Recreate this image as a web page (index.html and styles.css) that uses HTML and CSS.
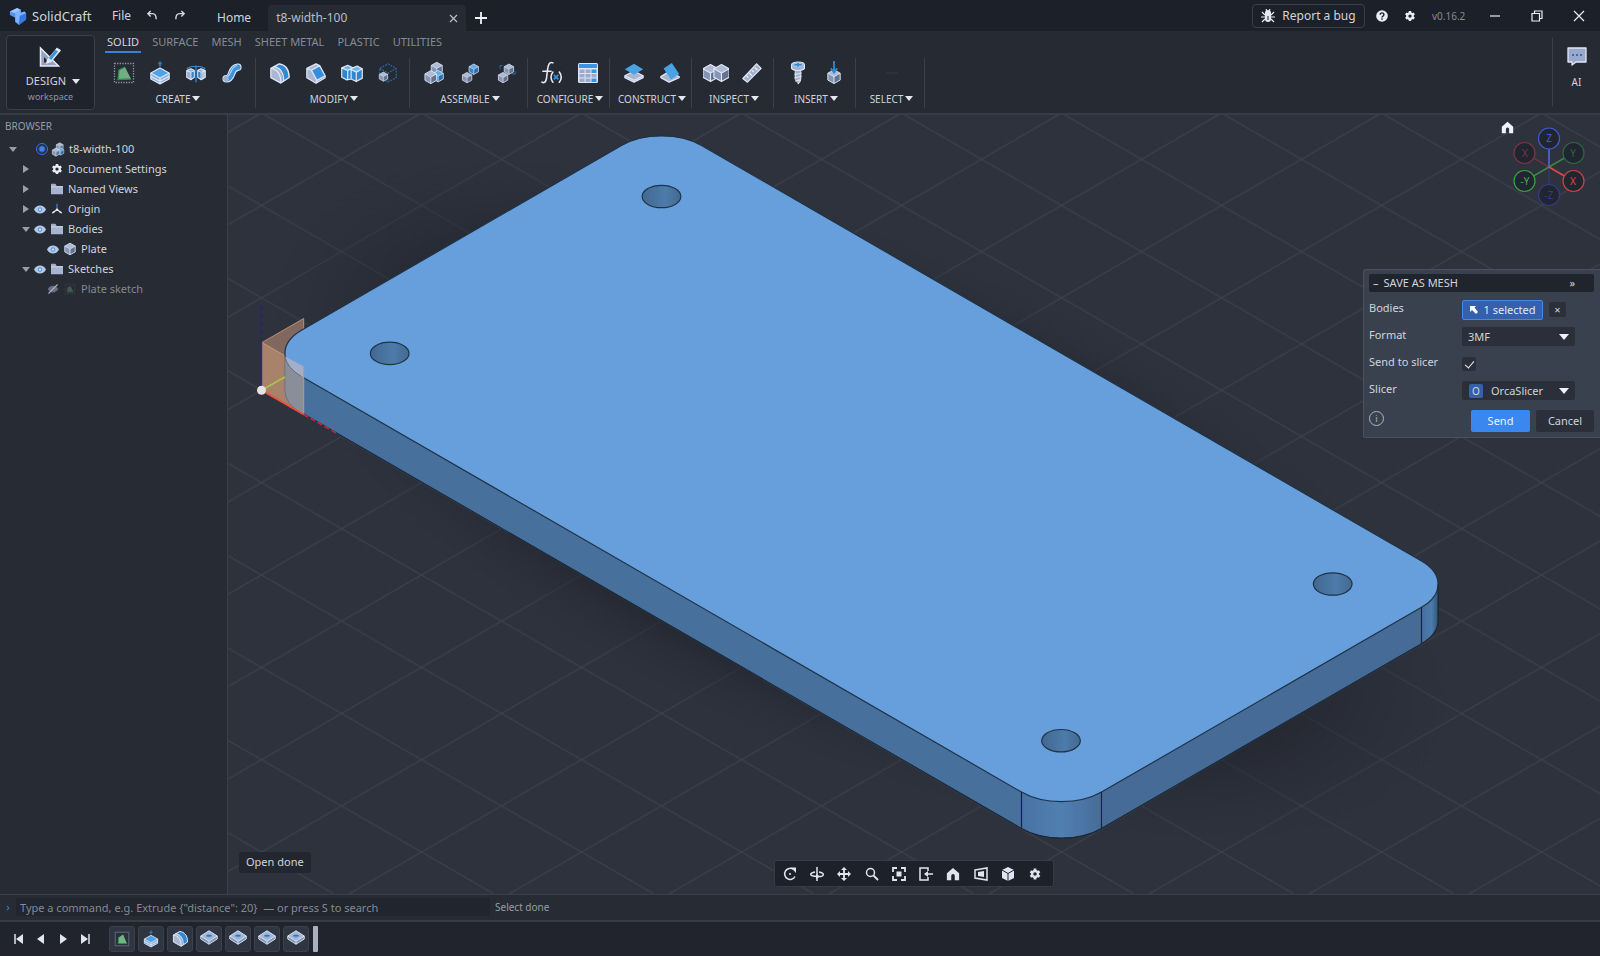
FILE: index.html
```html
<!DOCTYPE html>
<html lang="en">
<head>
<meta charset="utf-8">
<title>SolidCraft</title>
<link rel="stylesheet" href="styles.css">
</head>
<body>
<svg class="defs" aria-hidden="true">
  <defs>
    <symbol id="cube" viewBox="0 0 24 24">
      <path d="M12 2l9 5-9 5-9-5z" fill="#aebbd6"/><path d="M3 7l9 5v10l-9-5z" fill="#8795b4"/><path d="M21 7l-9 5v10l9-5z" fill="#64718f"/>
      <path d="M12 2l9 5v10l-9 5-9-5V7zM3 7l9 5 9-5M12 12v10" fill="none" stroke="#dde6f6" stroke-width="1.4" stroke-linejoin="round"/>
    </symbol>
    <symbol id="bluecube" viewBox="0 0 24 24">
      <path d="M12 2l9 5-9 5-9-5z" fill="#5fb0ea"/><path d="M3 7l9 5v10l-9-5z" fill="#2f86cf"/><path d="M21 7l-9 5v10l9-5z" fill="#2a6eae"/>
      <path d="M12 2l9 5v10l-9 5-9-5V7zM3 7l9 5 9-5M12 12v10" fill="none" stroke="#dde6f6" stroke-width="1.4" stroke-linejoin="round"/>
    </symbol>
    <symbol id="logo" viewBox="0 0 20 20">
      <path d="M1 5l8-4 4 2v3l4-1 2 2v7l-8 6-4-3v-5L1 9z" fill="#4f93f5"/><path d="M1 5l8-4 4 2-6 4z" fill="#9cc4ff"/><path d="M7 7l6-4v4l4-2 2 2-7 3v9l-5-3z" fill="#7fb3ff"/><path d="M12 10l7-3v7l-8 6z" fill="#3a78e0"/>
    </symbol>
    <symbol id="sketch" viewBox="0 0 24 24">
      <rect x="2.500" y="2.500" width="19" height="19" fill="none" stroke="#8e97a8" stroke-width="1.300" stroke-dasharray="1.300 1.300"/>
      <path d="M7 9l6-3 6 12-13 .5z" fill="#74ab87"/><path d="M7 9l6-3M7 9l-1 9.500 13-.5" fill="none" stroke="#2f9048" stroke-width="1.300"/>
    </symbol>
    <symbol id="sketchstep" viewBox="0 0 24 24">
      <rect x="3" y="3" width="18" height="18" fill="#2b3139" stroke="#596170" stroke-width="1.500"/>
      <path d="M7.500 10l6-4 5 12-11.500 0z" fill="#74b386"/><path d="M7.500 10L7 18l11.500 0" fill="none" stroke="#2f9048" stroke-width="1.300"/>
    </symbol>
    <symbol id="extrude" viewBox="0 0 24 26">
      <path d="M2 13l10 5.500 10-5.500v6.500l-10 5.500-10-5.500z" fill="#8fb4dc"/><path d="M2 13l10-5.500 10 5.500-10 5.500z" fill="#4aa3e6"/>
      <path d="M2 13l10-5.500 10 5.500v6.500l-10 5.500-10-5.500zM2 13l10 5.500 10-5.500M2 16.500l10 5.500 10-5.500M12 18.500v6" fill="none" stroke="#dde6f6" stroke-width="1.300" stroke-linejoin="round"/>
      <path d="M12 0l3 3.500h-2V6h-2V3.500H9z" fill="#2f78b8"/>
    </symbol>
    <symbol id="revolve" viewBox="0 0 26 24">
      <path d="M2 7c6-4 16-4 22 0M13 3v20" fill="none" stroke="#3a8bd4" stroke-width="1.500"/>
      <path d="M2 9l5-2 4 2v8l-4 3-5-3z" fill="#9ab0d2"/><path d="M7 10l4-2v9l-4 3zM15 8l5 2v10l-5-3z" fill="#2f86cf"/><path d="M15 8l4-1 5 2v8l-4 3V10z" fill="#b4c4df"/>
      <path d="M2 9l5-2 4 2v8l-4 3-5-3zM2 9l5 2 4-2M7 11v9M15 9l4-2 5 2v8l-5 3-4-3zM15 9l4 2 5-2M19 11v9" fill="none" stroke="#dde6f6" stroke-width="1.200" stroke-linejoin="round"/>
    </symbol>
    <symbol id="sweep" viewBox="0 0 24 24">
      <path d="M5 19c9 0 4-13 14-14" fill="none" stroke="#dde6f6" stroke-width="9" stroke-linecap="round"/>
      <path d="M5 19c9 0 4-13 14-14" fill="none" stroke="#3b94dd" stroke-width="6.500" stroke-linecap="round"/>
      <path d="M5 17c7-1 4-12 13-14" fill="none" stroke="#b9cdea" stroke-width="1.500"/><circle cx="5" cy="19" r="3.200" fill="#9fb0cf"/>
    </symbol>
    <symbol id="fillet" viewBox="0 0 24 24">
      <path d="M2 7l9-5c7 1 11 6 11 15l-9 6L2 17z" fill="#aab7d2"/><path d="M6 5l6-3c6 1 10 6 10 15l-7 4C15 12 12 7 6 5z" fill="#3189d4"/>
      <path d="M2 7l9-5c7 1 11 6 11 15l-9 6L2 17zM2 7c7 1 11 7 11 16M5 5c7 1 11 7 11 16" fill="none" stroke="#dde6f6" stroke-width="1.400" stroke-linejoin="round"/>
    </symbol>
    <symbol id="chamfer" viewBox="0 0 24 24">
      <path d="M2 7l10-5 4 2 6 12-10 6-10-5z" fill="#aab7d2"/><path d="M7 9l9-5 6 11-9 5z" fill="#358edb"/>
      <path d="M2 7l10-5 4 2 6 11v2l-10 6-10-6zM2 7l5 2 9-5M7 9l6 11 9-5M13 20l-1 3" fill="none" stroke="#dde6f6" stroke-width="1.400" stroke-linejoin="round"/>
    </symbol>
    <symbol id="combine" viewBox="0 0 28 24">
      <path d="M2 6l7-3 6 3 5-2 6 3v11l-7 4-6-3-5 1-6-3z" fill="#2f86cf"/><path d="M2 6l7-3 6 3-6 4zM13 8l7-4 6 3-7 4z" fill="#6bb6ee"/>
      <path d="M2 6l7-3 6 3 5-2 6 3v11l-7 4-6-3-5 1-6-3zM2 6l7 3 6-3M9 9v11M13 8l6 3 7-4M19 11v11M13 8v11" fill="none" stroke="#dde6f6" stroke-width="1.400" stroke-linejoin="round"/>
    </symbol>
    <symbol id="shell" viewBox="0 0 24 24">
      <path d="M12 2l9 5v10l-9 5-9-5V7zM3 7l9 5 9-5M12 12v10" fill="none" stroke="#2e6ea8" stroke-width="1.200" stroke-dasharray="2 1.200"/>
      <use href="#cube" x="1" y="10" width="12" height="12"/>
    </symbol>
    <symbol id="component" viewBox="0 0 24 26">
      <use href="#cube" x="7" y="0" width="16" height="16"/><use href="#bluecube" x="9" y="9" width="15" height="15"/><use href="#cube" x="0" y="9" width="17" height="17"/>
    </symbol>
    <symbol id="joint" viewBox="0 0 24 26">
      <use href="#bluecube" x="9" y="1" width="15" height="15"/><use href="#cube" x="1" y="11" width="15" height="15"/>
    </symbol>
    <symbol id="joint2" viewBox="0 0 24 26">
      <path d="M5 8V4h3M23 11v3h-4" stroke="#2766a2" fill="none" stroke-width="1.300"/><use href="#cube" x="8" y="1" width="15" height="15"/><use href="#cube" x="1" y="11" width="15" height="15"/>
    </symbol>
    <symbol id="params" viewBox="0 0 24 26">
      <path d="M13 2c-4-2-5 2-6 8l-1 9c-1 5-3 5-5 4M2 11h9M13 12c-3 4-3 7 0 11M20 12c3 4 3 7 0 11" fill="none" stroke="#e6edf8" stroke-width="1.700" stroke-linecap="round"/>
      <path d="M14 15l5 5M19 15l-5 5" stroke="#3a94e0" stroke-width="1.700"/>
    </symbol>
    <symbol id="table" viewBox="0 0 24 24">
      <rect x="2" y="2" width="20" height="20" rx="1.500" fill="#dde6f6"/><path d="M3 3h18v4H3z" fill="#3a94e0"/><path d="M3.500 8.500H8.500v3.500h-5zM9.500 8.500h5v3.500h-5zM3.500 13h5v3.500h-5zM9.500 13h5v3.500h-5zM3.500 17.500h5v3.500h-5zM9.500 17.500h5v3.500h-5zM15.500 13h5v3.500h-5z" fill="#9babc9"/><path d="M15.500 8.500h5v3.500h-5zM15.500 17.500h5v3.500h-5z" fill="#3a94e0"/>
    </symbol>
    <symbol id="offsetplane" viewBox="0 0 24 24">
      <path d="M2 15l10-5 10 5v2l-10 5-10-5z" fill="#a9b6d2" stroke="#dde6f6" stroke-width="1.400" stroke-linejoin="round"/><path d="M2 15l10 5 10-5" fill="none" stroke="#dde6f6" stroke-width="1.300"/><path d="M2 8l10-6 10 6-10 6z" fill="#49a2e4"/>
    </symbol>
    <symbol id="angleplane" viewBox="0 0 24 24">
      <path d="M2 16l8-5 12 5v1l-11 5-9-5z" fill="#a9b6d2" stroke="#dde6f6" stroke-width="1.400" stroke-linejoin="round"/><path d="M5 7l9-6 8 12-9 6z" fill="#49a2e4"/>
    </symbol>
    <symbol id="interfere" viewBox="0 0 28 24">
      <use href="#cube" x="-3" y="1" width="22" height="22"/><use href="#cube" x="9" y="1" width="22" height="22"/>
    </symbol>
    <symbol id="measure" viewBox="0 0 24 24">
      <path d="M2 18L17 2l5 5L7 22z" fill="#a5b1cb" stroke="#dde6f6" stroke-width="1.400" stroke-linejoin="round"/><path d="M6 15l2 2M9 12l3 3M12 9l2 2M15 6l3 3" stroke="#e9effa" stroke-width="1.300"/>
    </symbol>
    <symbol id="bolt" viewBox="0 0 24 26">
      <path d="M9 10h6v11l-3 4-3-4z" fill="#a5b1cb"/><path d="M5 4c0-4 14-4 14 0v4c-2 3-12 3-14 0z" fill="#a5b1cb" stroke="#dde6f6" stroke-width="1.300"/><ellipse cx="12" cy="4" rx="6.500" ry="2.800" fill="#9fc6ea"/><path d="M8 4h8M12 2v4" stroke="#2f86cf" stroke-width="1.700"/><path d="M9 11v9M15 11v9M8 15l8-2M8 18.500l8-2M9 22l6-2M12 25l3-4" stroke="#dde6f6" stroke-width="1.200"/>
    </symbol>
    <symbol id="insertmesh" viewBox="0 0 24 26">
      <use href="#cube" x="3" y="8" width="18" height="18"/><path d="M12 0v11M8.500 8l3.500 4.500L15.500 8" fill="none" stroke="#2f8ad6" stroke-width="2"/>
    </symbol>
    <symbol id="hole" viewBox="0 0 24 20">
      <path d="M1 8l11-7 11 7v4l-11 7-11-7z" fill="#7f93b5"/><path d="M1 8l11-7 11 7-11 7z" fill="#a3b6d6"/><path d="M1 8l11-7 11 7v4l-11 7-11-7zM1 8l11 7 11-7M12 15v4" fill="none" stroke="#dde6f6" stroke-width="1.200"/><ellipse cx="12" cy="7.500" rx="4" ry="2" fill="#2f77bb" stroke="#c3d3ec" stroke-width=".6"/>
    </symbol>
    <symbol id="folder" viewBox="0 0 16 14"><path d="M1 2h5l1 1.500h8V13H1z" fill="#a6b4cf"/><path d="M1 1.500h5l1 1.500M1 4.500h14" stroke="#d3dcec" fill="none"/></symbol>
    <symbol id="eye" viewBox="0 0 16 12"><path d="M0 6c3-7 13-7 16 0-3 7-13 7-16 0z" fill="#b4c8e8"/><circle cx="8" cy="6" r="3" fill="#5b9ade"/><circle cx="8" cy="6" r="1.500" fill="#dce9fa"/></symbol>
    <symbol id="eyeoff" viewBox="0 0 16 14"><path d="M1 7c3-6 11-6 14 0-3 6-11 6-14 0z" fill="#666f80"/><path d="M2 13L14 1" stroke="#aab3c2" stroke-width="1.500"/></symbol>
    <symbol id="gear" viewBox="0 0 24 24"><g stroke="currentColor" stroke-width="5" fill="none"><circle cx="12" cy="12" r="5.500" stroke-width="4.500"/><path d="M12 2v4M12 18v4M3.400 7l3.400 2M17.200 15l3.400 2M3.400 17l3.400-2M17.200 9l3.400-2"/></g></symbol>
    <symbol id="home" viewBox="0 0 16 16"><path d="M8 1l7 6v8h-5v-5a2 2 0 0 0-4 0v5H1V7z" fill="currentColor"/></symbol>
    <symbol id="axes" viewBox="0 0 16 16"><path d="M8 1v9" stroke="#3a8fdc" stroke-width="1.500"/><path d="M8 9l6 4M8 9l-6 4" stroke="#e8eefa" stroke-width="1.700"/><path d="M1 14l4-1-2-2zM15 14l-4-1 2-2z" fill="#e8eefa"/><circle cx="8" cy="9" r="1.700" fill="#e8eefa"/></symbol>
  </defs>
</svg>

<header class="titlebar">
  <div class="brand"><svg width="18" height="20"><use href="#logo"/></svg>SolidCraft</div>
  <button class="plain file">File</button>
  <button class="plain hist" aria-label="Undo"><svg width="11" height="11" viewBox="0 0 12 12"><path d="M4 1L1 4l3 3M1 4h5c3 0 4 2 4 6" class="line"/></svg></button>
  <button class="plain hist" aria-label="Redo"><svg width="11" height="11" viewBox="0 0 12 12"><path d="M8 1l3 3-3 3M11 4H6C3 4 2 6 2 10" class="line"/></svg></button>
  <nav class="doctabs">
    <a href="#" class="hometab">Home</a>
    <div class="doctab"><a href="#">t8-width-100</a><button class="plain" aria-label="Close tab"><svg width="9" height="9" viewBox="0 0 9 9"><path d="M1 1l7 7M8 1L1 8" class="line thin"/></svg></button></div>
    <button class="plain add" aria-label="New tab"><svg width="12" height="12" viewBox="0 0 12 12"><path d="M6 0v12M0 6h12" class="line bold"/></svg></button>
  </nav>
  <div class="titleright">
    <button class="bug"><svg width="14" height="14" viewBox="0 0 14 14"><path d="M4 4a3 3 0 0 1 6 0v6a3 3 0 0 1-6 0z" fill="#e4eaf5"/><path d="M1 3l3 3M13 3l-3 3M0 8h4M14 8h-4M1 13l3-3M13 13l-3-3M5 0l1 2M9 0L8 2" stroke="#e4eaf5" stroke-width="1.200"/><path d="M7 7v4" stroke="#1c2028"/></svg>Report a bug</button>
    <button class="plain" aria-label="Help"><svg width="12" height="12" viewBox="0 0 12 12"><circle cx="6" cy="6" r="5.800" fill="#e9eef8"/><path d="M4.200 4.700c0-2.500 3.700-2.400 3.700 0 0 1.400-1.900 1.400-1.900 2.700M6 8.300v1.400" fill="none" stroke="#1c2028" stroke-width="1.400"/></svg></button>
    <button class="plain" aria-label="Settings"><svg width="12" height="12"><use href="#gear"/></svg></button>
    <span class="version">v0.16.2</span>
    <div class="wins">
      <button class="plain" aria-label="Minimize"><svg width="10" height="12" viewBox="0 0 10 12"><path d="M0 6h10" class="line thin"/></svg></button>
      <button class="plain" aria-label="Restore"><svg width="12" height="12" viewBox="0 0 12 12"><path d="M1 3.500h7.500V11H1zM3.500 3V1H11v7.500H9" class="line thin"/></svg></button>
      <button class="plain" aria-label="Close"><svg width="12" height="12" viewBox="0 0 12 12"><path d="M1 1l10 10M11 1L1 11" class="line thin"/></svg></button>
    </div>
  </div>
</header>

<section class="ribbon">
  <button class="workspace">
    <svg width="22" height="22" viewBox="0 0 22 22"><path d="M1.500 2v18h18z" fill="#97a3bf" stroke="#e6ecf8" stroke-width="1.500"/><path d="M5 11v5.500h5.500z" fill="#262a33"/><path d="M20 3L10 15" stroke="#dde6f6" stroke-width="5"/><path d="M19 3L11 13" stroke="#3b94dd" stroke-width="3"/><path d="M17 3l4 2" stroke="#e6ecf8" stroke-width="2.500"/><path d="M7 18l1-5 4 3z" fill="#e6ecf8"/></svg>
    <span class="wsname">DESIGN<i class="tri"></i></span><span class="wssub">workspace</span>
  </button>
  <div class="tools">
    <nav class="tabs"><a href="#" class="on">SOLID</a><a href="#">SURFACE</a><a href="#">MESH</a><a href="#">SHEET METAL</a><a href="#">PLASTIC</a><a href="#">UTILITIES</a></nav>
    <div class="groups">
      <div class="group"><div class="icons">
        <button aria-label="Sketch"><svg width="24" height="24"><use href="#sketch"/></svg></button>
        <button aria-label="Extrude"><svg width="22" height="24"><use href="#extrude"/></svg></button>
        <button aria-label="Revolve"><svg width="22" height="22"><use href="#revolve"/></svg></button>
        <button aria-label="Sweep"><svg width="20" height="20"><use href="#sweep"/></svg></button></div>
        <button class="glabel">CREATE<i class="tri"></i></button></div>
      <div class="group"><div class="icons">
        <button aria-label="Fillet"><svg width="22" height="22"><use href="#fillet"/></svg></button>
        <button aria-label="Chamfer"><svg width="22" height="22"><use href="#chamfer"/></svg></button>
        <button aria-label="Combine"><svg width="24" height="22"><use href="#combine"/></svg></button>
        <button aria-label="Shell"><svg width="22" height="24"><use href="#shell"/></svg></button></div>
        <button class="glabel">MODIFY<i class="tri"></i></button></div>
      <div class="group"><div class="icons">
        <button aria-label="New component"><svg width="22" height="24"><use href="#component"/></svg></button>
        <button aria-label="Joint"><svg width="20" height="22"><use href="#joint"/></svg></button>
        <button aria-label="As-built joint"><svg width="20" height="22"><use href="#joint2"/></svg></button></div>
        <button class="glabel">ASSEMBLE<i class="tri"></i></button></div>
      <div class="group"><div class="icons">
        <button aria-label="Parameters"><svg width="22" height="24"><use href="#params"/></svg></button>
        <button aria-label="Configuration table"><svg width="24" height="24"><use href="#table"/></svg></button></div>
        <button class="glabel">CONFIGURE<i class="tri"></i></button></div>
      <div class="group"><div class="icons">
        <button aria-label="Offset plane"><svg width="22" height="22"><use href="#offsetplane"/></svg></button>
        <button aria-label="Angle plane"><svg width="22" height="22"><use href="#angleplane"/></svg></button></div>
        <button class="glabel">CONSTRUCT<i class="tri"></i></button></div>
      <div class="group"><div class="icons">
        <button aria-label="Interference"><svg width="26" height="22"><use href="#interfere"/></svg></button>
        <button aria-label="Measure"><svg width="22" height="22"><use href="#measure"/></svg></button></div>
        <button class="glabel">INSPECT<i class="tri"></i></button></div>
      <div class="group"><div class="icons">
        <button aria-label="Insert fastener"><svg width="22" height="24"><use href="#bolt"/></svg></button>
        <button aria-label="Insert mesh"><svg width="22" height="24"><use href="#insertmesh"/></svg></button></div>
        <button class="glabel">INSERT<i class="tri"></i></button></div>
      <div class="group sel"><div class="icons"><button aria-label="Select"><svg width="12" height="4" viewBox="0 0 12 4"><path d="M0 2h12" stroke="#363b46"/></svg></button></div>
        <button class="glabel">SELECT<i class="tri"></i></button></div>
    </div>
  </div>
  <button class="ai"><svg width="20" height="19" viewBox="0 0 20 19"><path d="M1 1h18v14H9l-4 3v-3H1z" fill="#9ba8cc" stroke="#dfe7f7" stroke-width="1.300" stroke-linejoin="round"/><path d="M5 8h2M9 8h2M13 8h2" stroke="#2678b8" stroke-width="2"/></svg>AI</button>
</section>

<main class="main">
  <aside class="browser">
    <h2>BROWSER</h2>
    <ul class="tree">
      <li class="l0"><i class="tg down"></i><input type="radio" checked aria-label="Activate t8-width-100"><svg class="ic" width="14" height="15"><use href="#component"/></svg><span>t8-width-100</span></li>
      <li class="l1"><i class="tg"></i><i class="vis"></i><svg class="ic" width="12" height="12"><use href="#gear"/></svg><span>Document Settings</span></li>
      <li class="l1"><i class="tg"></i><i class="vis"></i><svg class="ic" width="14" height="12"><use href="#folder"/></svg><span>Named Views</span></li>
      <li class="l1"><i class="tg"></i><svg class="vis" height="9"><use href="#eye"/></svg><svg class="ic" width="12" height="12"><use href="#axes"/></svg><span>Origin</span></li>
      <li class="l1"><i class="tg down"></i><svg class="vis" height="9"><use href="#eye"/></svg><svg class="ic" width="14" height="12"><use href="#folder"/></svg><span>Bodies</span></li>
      <li class="l2"><svg class="vis" height="9"><use href="#eye"/></svg><svg class="ic" width="14" height="14"><use href="#cube"/></svg><span>Plate</span></li>
      <li class="l1"><i class="tg down"></i><svg class="vis" height="9"><use href="#eye"/></svg><svg class="ic" width="14" height="12"><use href="#folder"/></svg><span>Sketches</span></li>
      <li class="l2 off"><svg class="vis" height="12"><use href="#eyeoff"/></svg><svg class="ic faint" width="12" height="12"><use href="#sketch"/></svg><span>Plate sketch</span></li>
    </ul>
  </aside>

  <section class="viewport">
    <svg class="scene" viewBox="228 115 1372 780" preserveAspectRatio="xMidYMid slice" role="img" aria-label="Plate model">
      <defs>
        <pattern id="grid" x="261.500" y="390.700" width="160" height="92.380" patternUnits="userSpaceOnUse"><path d="M0 0L160 92.380M0 92.380L160 0" stroke="#3e444f" stroke-width="1"/></pattern>
        <radialGradient id="shade"><stop offset=".5" stop-color="#1d2027" stop-opacity=".9"/><stop offset=".7" stop-color="#1f222a" stop-opacity=".75"/><stop offset=".85" stop-color="#262932" stop-opacity=".35"/><stop offset="1" stop-color="#2e323d" stop-opacity="0"/></radialGradient>
        <linearGradient id="round"><stop offset="0" stop-color="#4873a3"/><stop offset=".5" stop-color="#507fb1"/><stop offset="1" stop-color="#466c99"/></linearGradient>
        <linearGradient id="bore"><stop offset="0" stop-color="#426890"/><stop offset=".6" stop-color="#4d7bab"/><stop offset="1" stop-color="#44698f"/></linearGradient>
        <linearGradient id="edge"><stop offset="0" stop-color="#456f9e"/><stop offset=".6" stop-color="#4b7cac"/><stop offset="1" stop-color="#355575"/></linearGradient>
      </defs>
      <rect x="0" y="0" width="1900" height="1200" fill="#2e323d"/>
      <rect x="0" y="0" width="1900" height="1200" fill="url(#grid)"/>
      <circle r="1.380" fill="url(#shade)" transform="matrix(400 231 200 -115.500 861 500)"/>
      <path d="M262 343L303.700 319V367L262 391Z" fill="#80685f" stroke="#b98d70"/>
      <path d="M262 343L303.700 367V415L262 391Z" fill="#a9826c" stroke="#c99470"/>
      <path d="M284.900 353.800V390.700A56.600 32.700 0 0 0 301.500 413.800L1021.500 829.500H1062L1061 780 301.500 340Z" fill="#48709d"/>
      <path d="M1061 790L1101.500 829.500 1421.500 644.700V600Z" fill="#466b97"/>
      <path d="M1021.500 780V829A56.600 32.700 0 0 0 1101.500 829V780Z" fill="url(#round)"/>
      <path d="M1421.500 590V644.700A56.600 32.700 0 0 0 1438.100 621.600V584.700Z" fill="url(#edge)"/>
      <path d="M301.500 330.700L621.500 146A56.600 32.700 0 0 1 701.500 146L1421.500 561.600A56.600 32.700 0 0 1 1421.500 607.800L1101.500 792.600A56.600 32.700 0 0 1 1021.500 792.600L301.500 376.900A56.600 32.700 0 0 1 301.500 330.700Z" fill="#669fdb" stroke="#1f3347" stroke-width="1.200"/>
      <path d="M301.500 413.200L1021.500 829A56.600 32.700 0 0 0 1101.500 829L1421.500 644.200A56.600 32.700 0 0 0 1438.100 621V584.700M1021.500 792.600V829M1101.500 792.600V829M1421.500 607.800V644.200" fill="none" stroke="#192735" stroke-width="1.200"/>
      <g fill="url(#bore)" stroke="#1f3347" stroke-width="1.200"><ellipse cx="661.500" cy="197" rx="19.300" ry="11.200"/><ellipse cx="389.700" cy="353.900" rx="19.300" ry="11.200"/><ellipse cx="1332.700" cy="584.500" rx="19.300" ry="11.200"/><ellipse cx="1061" cy="741.200" rx="19.300" ry="11.200"/></g>
      <path d="M284.900 353.800V390.700A56.600 32.700 0 0 0 301.500 413.800L303.700 415V378L301.500 376.900A56.600 32.700 0 0 1 284.900 353.800Z" fill="#8a8e99"/>
      <path d="M285.300 357L303.700 367V378L301.500 376.900A56.600 32.700 0 0 1 285.300 357Z" fill="#a3afc8"/>
      <path d="M284.900 358V390.700A56.600 32.700 0 0 0 301.500 413.800M284.900 357A56.600 32.700 0 0 0 301.500 376.900" fill="none" stroke="#71747e"/>
      <path d="M303.700 367V414" stroke="#b39c90"/>
      <path d="M261.500 390.700V343" stroke="#2b2390" stroke-width="1.500"/><path d="M261.500 343V303" stroke="#201f8c" stroke-width="1.500" stroke-dasharray="5 3"/>
      <path d="M261.500 390.700L285 377.500" stroke="#a8c840" stroke-width="1.700"/><path d="M261.500 390.700L303.700 415" stroke="#f04a35" stroke-width="1.700"/><path d="M303.700 415L337 434" stroke="#cf2534" stroke-width="1.500" stroke-dasharray="5 3"/>
      <circle cx="261.500" cy="390.700" r="4.500" fill="#e4e2e3"/>
    </svg>

    <div class="gizmo">
      <button class="plain" aria-label="Home view"><svg width="13" height="13"><use href="#home"/></svg></button>
      <svg class="compass" width="69" height="80" viewBox="1 0 71 80" preserveAspectRatio="xMinYMin slice" overflow="visible">
        <path d="M36 40v28" stroke="#2e3a80"/><path d="M36 40L12 26" stroke="#7d3240" stroke-width="1.300"/><path d="M36 40l24-14M36 40L12 54" stroke="#3d8544" stroke-width="1.500"/><path d="M36 40V11" stroke="#4866dd" stroke-width="1.700"/><path d="M36 40l24 14" stroke="#e34646" stroke-width="1.700"/>
        <g fill="#20252f" stroke-width="1.200"><circle cx="36" cy="11.500" r="10.500" stroke="#405bce"/><circle cx="11.500" cy="26" r="10.500" stroke="#7c3544"/><circle cx="60.500" cy="26" r="10.500" stroke="#2e6740"/><circle cx="11.500" cy="54" r="10.500" stroke="#37a341"/><circle cx="60.500" cy="54" r="10.500" stroke="#d24047"/><circle cx="36" cy="68" r="10.500" stroke="#303e88"/></g>
        <g class="axis"><text x="36" y="15" fill="#405bce">Z</text><text x="12" y="30" fill="#7c3544">X</text><text x="60" y="30" fill="#2e6740">Y</text><text x="12" y="58" fill="#3fb549">-Y</text><text x="60" y="58" fill="#e34646">X</text><text x="36" y="72" fill="#303e88">-Z</text></g>
      </svg>
    </div>

    <form class="panel">
      <div class="phead"><span>–</span><span>SAVE AS MESH</span><span class="more">»</span></div>
      <div class="prow"><span class="lab">Bodies</span><div class="ctl"><button type="button" class="picked"><svg width="8" height="8" viewBox="0 0 8 8"><path d="M0 0h6L4.500 1.500 8 6 6 8 2 4 0 6z" fill="#fff"/></svg>1 selected</button><button type="button" class="clear" aria-label="Clear bodies">×</button></div></div>
      <div class="prow"><label class="lab" for="fmt">Format</label><div class="ctl drop"><select id="fmt"><option>3MF</option></select></div></div>
      <div class="prow"><label class="lab" for="snd">Send to slicer</label><div class="ctl"><input type="checkbox" id="snd" checked></div></div>
      <div class="prow"><label class="lab" for="slc">Slicer</label><div class="ctl drop badge"><b>O</b><select id="slc"><option>OrcaSlicer</option></select></div></div>
      <div class="pfoot"><button type="button" class="info" aria-label="Info">i</button><button type="button" class="send">Send</button><button type="button" class="cancel">Cancel</button></div>
    </form>

    <output class="toast">Open done</output>

    <div class="viewbar">
      <button aria-label="Orbit"><svg viewBox="0 0 14 14"><path d="M10.500 2.500a5.500 5.500 0 1 0 1.500 7" class="line"/><path d="M8 0.500h5v5.500z" fill="currentColor"/><circle cx="7" cy="7" r="1" fill="currentColor"/></svg></button>
      <button aria-label="Turntable"><svg viewBox="0 0 14 14"><path d="M7 0v14M5 5C-1 6-1 9 7 9.500S15 6 9 5" class="line"/><path d="M6 7l4 2.500L6 12z" fill="currentColor"/></svg></button>
      <button aria-label="Pan"><svg viewBox="0 0 14 14"><path d="M7 1v12M1 7h12" class="line bold"/><path d="M7 0l3 3H4zM7 14l3-3H4zM0 7l3-3v6zM14 7l-3-3v6z" fill="currentColor"/></svg></button>
      <button aria-label="Zoom"><svg viewBox="0 0 14 14"><circle cx="5.500" cy="5.500" r="4" class="line"/><path d="M8.500 8.500L13 13" class="line bold"/></svg></button>
      <button aria-label="Fit"><svg viewBox="0 0 14 14"><path d="M1 5V1h4M9 1h4v4M13 9v4H9M5 13H1V9" class="line bold"/><path d="M4.500 4.500h5v5h-5z" fill="currentColor"/></svg></button>
      <button aria-label="Look at"><svg viewBox="0 0 14 14"><path d="M9 4V1H1v12h8v-3M6 7h8" class="line"/><path d="M5 7l4-3v6z" fill="currentColor"/></svg></button>
      <button aria-label="Home"><svg viewBox="0 0 16 16"><use href="#home" width="16" height="16"/></svg></button>
      <button aria-label="Perspective"><svg viewBox="0 0 14 14"><path d="M1 3l12-2v12L1 11z" class="line"/><path d="M4 5l6-1v6L4 9z" fill="currentColor"/></svg></button>
      <button aria-label="Display style"><svg viewBox="0 0 14 14"><path d="M7 0l6 3v8l-6 3-6-3V3z" fill="currentColor"/><path d="M1 3l6 3.500L13 3M7 6.500V14" stroke="#1d212a" fill="none"/></svg></button>
      <button aria-label="View settings"><svg viewBox="0 0 26 26"><use href="#gear" x="1" y="1" width="24" height="24"/></svg></button>
    </div>
  </section>
</main>

<section class="command"><span class="prompt">›</span><input type="text" aria-label="Command" placeholder="Type a command, e.g. Extrude {&quot;distance&quot;: 20}  — or press S to search"><span class="status">Select done</span></section>

<footer class="timeline">
  <button class="plain" aria-label="First"><svg width="10" height="10" viewBox="0 0 10 10"><path d="M1 0v10" class="line"/><path d="M9 0v10L2 5z" fill="currentColor"/></svg></button>
  <button class="plain" aria-label="Previous"><svg width="10" height="10" viewBox="0 0 10 10"><path d="M8 0v10L1 5z" fill="currentColor"/></svg></button>
  <button class="plain" aria-label="Play"><svg width="10" height="10" viewBox="0 0 10 10"><path d="M2 0v10l7-5z" fill="currentColor"/></svg></button>
  <button class="plain" aria-label="Last"><svg width="10" height="10" viewBox="0 0 10 10"><path d="M9 0v10" class="line"/><path d="M1 0v10l7-5z" fill="currentColor"/></svg></button>
  <div class="steps">
    <button aria-label="Sketch"><svg width="18" height="18"><use href="#sketchstep"/></svg></button>
    <button aria-label="Extrude"><svg width="16" height="18"><use href="#extrude"/></svg></button>
    <button aria-label="Fillet"><svg width="17" height="17"><use href="#fillet"/></svg></button>
    <button class="hole" aria-label="Hole 1"><svg width="18" height="15"><use href="#hole"/></svg></button>
    <button class="hole" aria-label="Hole 2"><svg width="18" height="15"><use href="#hole"/></svg></button>
    <button class="hole" aria-label="Hole 3"><svg width="18" height="15"><use href="#hole"/></svg></button>
    <button class="hole" aria-label="Hole 4"><svg width="18" height="15"><use href="#hole"/></svg></button>
    <i class="marker"></i>
  </div>
</footer>
</body>
</html>
```
FILE: styles.css
```css
* { box-sizing: border-box; }
body { margin: 0; height: 100vh; display: flex; flex-direction: column; overflow: hidden; background: #272b34; color: #cfd4dd; font: 12px/16px "Noto Sans", sans-serif; }
button, input, select { font: inherit; color: inherit; margin: 0; }
button { padding: 0; border: 0; background: none; display: flex; align-items: center; justify-content: center; white-space: nowrap; }
a { color: inherit; text-decoration: none; }
svg { display: block; flex: none; }
i { font-style: normal; }
.defs { position: absolute; width: 0; height: 0; }
.line { fill: none; stroke: currentColor; stroke-width: 1.5; }
.thin { stroke-width: 1.2; }
.bold { stroke-width: 1.8; }
.tri { display: inline-block; border: 4px solid transparent; border-top: 5px solid #e3e7ee; border-bottom: 0; }

.titlebar { flex: none; height: 31px; background: #1c2028; display: flex; align-items: center; }
.brand { display: flex; align-items: center; gap: 5px; width: 104px; padding-left: 9px; font-size: 13px; white-space: nowrap; }
.file { width: 35px; }
.hist { width: 27px; color: #d5dae4; }
.doctabs { display: flex; align-self: stretch; align-items: flex-end; margin-left: 12px; }
.doctabs > * { height: 26px; display: flex; align-items: center; }
.hometab { padding: 0 17px 0 12px; }
.doctab { width: 198px; background: #262a33; border-radius: 4px 4px 0 0; padding: 0 8px; justify-content: space-between; color: #b9bec8; }
.add { width: 30px; color: #f0f3f8; }
.titleright { margin-left: auto; display: flex; align-items: center; gap: 16px; padding-right: 15px; color: #e9eef8; }
.bug { height: 24px; width: 113px; gap: 7px; border: 1px solid #3b404b; border-radius: 4px; color: #cfd4dd; margin-right: -5px; }
.version { font-size: 10px; color: #858b97; width: 34px; }
.wins { display: flex; gap: 30px; margin-left: 7px; }
.wins button { width: 12px; }

.ribbon { flex: none; height: 84px; display: flex; background: #262a33; border-bottom: 2px solid #383c46; }
.workspace { flex: none; flex-direction: column; width: 89px; height: 75px; margin: 4px 0 0 6px; padding-top: 6px; background: #1f232b; border: 1px solid #3a3f49; border-radius: 4px; }
.workspace svg { margin: 0 2px 5px 0; }
.wsname { display: flex; align-items: center; gap: 6px; padding-left: 5px; font-size: 11px; }
.wssub { font-size: 9px; color: #90959f; }
.tools { flex: 1; padding-left: 11px; }
.tabs { display: flex; gap: 13px; font-size: 11px; color: #858b96; height: 27px; white-space: nowrap; padding-left: 1px; }
.tabs a { height: 22px; padding-top: 3px; }
.tabs .on { color: #cfd4dd; border-bottom: 2px solid #3b7fd8; margin: 0 -2px; padding-left: 2px; padding-right: 2px; }
.groups { display: flex; height: 50px; }
.group { padding: 0 3px 0 6px; border-right: 1px solid #3a3f49; display: flex; flex-direction: column; }
.group:first-child { padding: 0 5px 0 0; }
.icons { display: flex; height: 33px; margin-bottom: 2px; justify-content: center; }
.icons button { width: 36px; }
.sel { width: 69px; }
.glabel { gap: 2px; height: 20px; font-size: 10px; }
.ai { width: 48px; height: 68px; margin-top: 7px; padding-bottom: 8px; border-left: 1px solid #3a3f49; flex-direction: column; gap: 8px; font-size: 10px; }

.main { flex: 1; min-height: 0; display: grid; grid-template-columns: 228px 1fr; }
.browser { background: #272b34; border-right: 1px solid #3a3f49; }
.browser h2 { margin: 4px 0 5px 5px; font-weight: 400; font-size: 10px; line-height: 15px; color: #969ba6; }
.tree { list-style: none; margin: 0; padding: 0; font-size: 11px; }
.tree li { height: 20px; display: flex; align-items: center; white-space: nowrap; }
.l0 { padding-left: 6px; }
.l1 { padding-left: 19px; }
.l2 { padding-left: 46px; }
.tg { width: 14px; display: flex; justify-content: center; }
.tg::before { content: ""; border: 4px solid transparent; border-left: 6px solid #989da7; border-right: 0; }
.tg.down::before { border: 4px solid transparent; border-top: 5px solid #989da7; border-bottom: 0; }
.vis { width: 14px; padding: 0 1px; }
svg.ic { margin: 0 2px 0 3px; width: 14px; color: #e8edf6; }
.tree span { margin-left: 2px; }
.tree input { appearance: none; width: 12px; height: 12px; border-radius: 50%; border: 1px solid #2f7ae5; background: radial-gradient(circle, #3b87f0 0 2px, #272b34 4px); margin: 0 0 0 16px; }
.off { color: #838893; }
.faint { opacity: .35; }

.viewport { position: relative; overflow: hidden; background: #2e323d; }
.scene { position: absolute; inset: 0; width: 100%; height: 100%; }
.gizmo { position: absolute; top: 6px; right: 17px; display: flex; align-items: flex-start; color: #eef2fa; }
.compass { margin-top: 6px; }
.axis { font: 10px "Noto Sans", sans-serif; text-anchor: middle; }
.panel { position: absolute; top: 154px; right: 0; width: 237px; padding: 4px 6px 5px 5px; background: #3a414e; border: 1px solid #4a525f; border-right: 0; border-radius: 3px 0 0 3px; font-size: 11px; }
.phead { display: flex; gap: 5px; height: 18px; margin-bottom: 4px; padding: 0 4px; align-items: center; background: #20242d; border-radius: 2px; }
.more { margin-left: auto; padding-right: 15px; }
.prow { display: grid; grid-template-columns: 93px 1fr; height: 27px; align-items: center; }
.lab { padding-bottom: 3px; }
.ctl { display: flex; align-items: center; }
.picked { width: 81px; height: 20px; gap: 6px; background: #3560ab; border: 1px solid #4388f0; border-radius: 2px; color: #e1e8f5; }
.clear { width: 17px; height: 15px; margin-left: 6px; background: #2a2f39; border-radius: 2px; }
.drop { position: relative; width: 113px; }
.drop select { appearance: none; width: 100%; height: 19px; padding: 0 6px; line-height: 17px; border: 0; border-radius: 2px; background: #2a2f39; }
.drop::after { content: ""; position: absolute; right: 6px; top: 7px; border: 5px solid transparent; border-top: 6px solid #eef1f6; border-bottom: 0; pointer-events: none; }
.badge select { padding-left: 29px; }
.badge b { position: absolute; left: 7px; top: 3px; width: 14px; height: 14px; border-radius: 2px; background: #3560ab; font: 10px/14px "Noto Sans", sans-serif; text-align: center; }
.prow input { appearance: none; width: 14px; height: 14px; border-radius: 2px; background: #2a2f39; display: grid; place-items: center; }
.prow input::before { content: ""; width: 4px; height: 8px; border: solid #eef1f6; border-width: 0 1px 1px 0; transform: rotate(40deg); }
.pfoot { display: flex; gap: 6px; height: 28px; align-items: flex-end; }
.pfoot .send { width: 59px; height: 22px; background: #3b87f0; border-radius: 2px; margin-left: auto; color: #eef3fc; }
.pfoot .cancel { width: 58px; height: 22px; background: #2a2f39; border-radius: 2px; }
.info { width: 15px; height: 15px; margin-bottom: 6px; border: 1px solid #aeb4bf; border-radius: 50%; font-size: 9px; color: #aeb4bf; }
.toast { position: absolute; left: 11px; bottom: 21px; height: 21px; padding: 0 7px; line-height: 20px; font-size: 11px; background: #22262e; border-radius: 3px; }
.viewbar { position: absolute; left: 50%; bottom: 7px; transform: translateX(-50%); display: flex; width: 280px; padding: 0 4px 0 1px; height: 27px; background: #1d212a; border: 1px solid #363c47; border-radius: 3px; color: #dfe5f0; }
.viewbar button { flex: 1; }
.viewbar svg { width: 14px; height: 14px; }

.command { flex: none; height: 26px; border-top: 1px solid #3a3f49; display: flex; align-items: center; font-size: 10px; padding-bottom: 1px; }
.prompt { width: 16px; text-align: center; color: #3b87f0; }
.command input { width: 474px; height: 18px; padding: 0 4px; border: 0; border-radius: 2px; background: #21252d; font-size: 11px; }
.command input::placeholder { color: #858a95; opacity: 1; }
.status { margin-left: 5px; color: #989da7; }
.timeline { flex: none; height: 36px; border-top: 2px solid #383c46; background: #21242d; display: flex; align-items: center; padding: 0 0 1px 8px; color: #e1e6ee; }
.timeline .plain { width: 22px; }
.steps { display: flex; gap: 3px; margin-left: 13px; }
.steps button { width: 26px; height: 26px; background: #303641; border: 1px solid #3a404c; border-radius: 3px; }
.steps .hole { padding-bottom: 3px; }
.marker { width: 5px; height: 26px; margin-left: 1px; background: #aab0bd; border-radius: 1px; }
```
